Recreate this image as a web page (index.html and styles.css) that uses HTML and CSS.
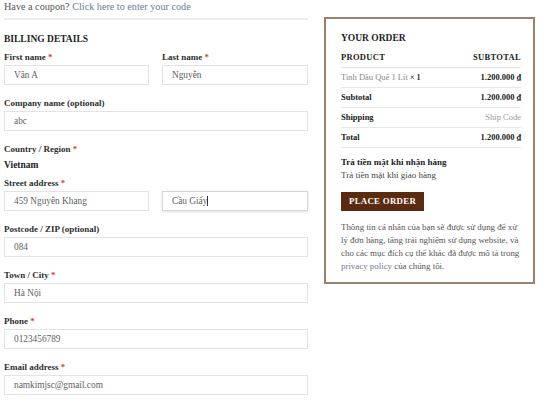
FILE: index.html
```html
<!DOCTYPE html>
<html lang="vi">
<head>
<meta charset="utf-8">
<title>Checkout</title>
<link rel="stylesheet" href="styles.css">
</head>
<body>
<div class="page">
  <section class="billing">
    <p class="coupon">Have a coupon? <a href="#">Click here to enter your code</a></p>
    <h3 class="heading">BILLING DETAILS</h3>
    <div class="row-2">
      <div class="field">
        <label>First name <span class="req">*</span></label>
        <input class="input" type="text" value="Văn A">
      </div>
      <div class="field">
        <label>Last name <span class="req">*</span></label>
        <input class="input" type="text" value="Nguyễn">
      </div>
    </div>
    <div class="field">
      <label>Company name (optional)</label>
      <input class="input" type="text" value="abc">
    </div>
    <div class="field country">
      <label>Country / Region <span class="req">*</span></label>
      <div class="country-value">Vietnam</div>
    </div>
    <div class="field">
      <label>Street address <span class="req">*</span></label>
      <div class="row-2 inner">
        <input class="input" type="text" value="459 Nguyễn Khang">
        <div class="input focused">Cầu Giấy<span class="caret"></span></div>
      </div>
    </div>
    <div class="field">
      <label>Postcode / ZIP (optional)</label>
      <input class="input" type="text" value="084">
    </div>
    <div class="field">
      <label>Town / City <span class="req">*</span></label>
      <input class="input" type="text" value="Hà Nội">
    </div>
    <div class="field">
      <label>Phone <span class="req">*</span></label>
      <input class="input" type="text" value="0123456789">
    </div>
    <div class="field">
      <label>Email address <span class="req">*</span></label>
      <input class="input" type="text" value="namkimjsc@gmail.com">
    </div>
  </section>

  <aside class="order">
    <h3 class="heading order-title">YOUR ORDER</h3>
    <table class="order-table">
      <thead>
        <tr><th>PRODUCT</th><th class="r">SUBTOTAL</th></tr>
      </thead>
      <tbody>
        <tr class="item"><td>Tinh Dầu Quế 1 Lít <strong class="qty">× 1</strong></td><td class="r amount">1.200.000 ₫</td></tr>
      </tbody>
      <tfoot>
        <tr><th>Subtotal</th><td class="r amount">1.200.000 ₫</td></tr>
        <tr class="ship"><th>Shipping</th><td class="r">Ship Code</td></tr>
        <tr><th>Total</th><td class="r amount">1.200.000 ₫</td></tr>
      </tfoot>
    </table>
    <div class="payment">
      <div class="pay-title">Trả tiền mặt khi nhận hàng</div>
      <div class="pay-desc">Trả tiền mặt khi giao hàng</div>
    </div>
    <button class="place" type="button">PLACE ORDER</button>
    <p class="privacy">Thông tin cá nhân của bạn sẽ được sử dụng để xử lý đơn hàng, tăng trải nghiệm sử dụng website, và cho các mục đích cụ thể khác đã được mô tả trong <a href="#">privacy policy</a> của chúng tôi.</p>
  </aside>
</div>
</body>
</html>
```

FILE: styles.css
```css
* { box-sizing: border-box; }
html, body { margin: 0; padding: 0; background: #fff; }
body {
  font-family: "Liberation Serif", "DejaVu Serif", serif;
  color: #444;
  font-size: 10.2px;
}
.page {
  display: flex;
  align-items: flex-start;
  gap: 16px;
  padding: 0 9px 0 4px;
}
.billing { width: 304px; flex: none; }
.coupon {
  margin: 0;
  line-height: 14px;
  padding-bottom: 4px;
  border-bottom: 2px solid #ececec;
  color: #555;
}
a { color: #6a7b98; text-decoration: none; }
.heading {
  margin: 12px 0 5px;
  font-size: 9.5px;
  line-height: 14px;
  font-weight: bold;
  color: #1e1e1e;
}
.row-2 { display: grid; grid-template-columns: 145px 146px; gap: 13px; }
.field { margin-bottom: 12px; }
label {
  display: block;
  font-size: 9px;
  font-weight: bold;
  line-height: 12px;
  color: #2e2e2e;
  margin-bottom: 2px;
}
.req { color: #e2401c; }
.input {
  display: block;
  width: 100%;
  height: 20px;
  border: 1px solid #e3e3e3;
  padding: 0 9px;
  font-family: "Liberation Serif", serif;
  font-size: 9.3px;
  line-height: 18px;
  color: #5e5e5e;
  background: #fff;
  outline: none;
}
.input.focused {
  border-color: #d6d6d6;
  box-shadow: 0 1px 3px rgba(0,0,0,0.12);
}
.caret { display: inline-block; width: 1px; height: 10px; background: #333; vertical-align: -2px; }
.country { margin-bottom: 4px; }
.country-value {
  font-size: 9.5px;
  font-weight: bold;
  line-height: 16px;
  color: #222;
}
.order {
  width: 211px;
  flex: none;
  margin-top: 17px;
  border: 2px solid #9a8070;
  padding: 12px 12px 9px 15px;
}
.order-title { margin: 0 0 3px; }
.order-table {
  width: 100%;
  border-collapse: collapse;
  font-size: 8.5px;
}
.order-table th, .order-table td {
  text-align: left;
  padding: 0;
  height: 20px;
  border-bottom: 1px solid #e8e8e8;
  vertical-align: middle;
}
.order-table thead th {
  height: 19px;
  font-size: 8.5px;
  letter-spacing: 0.3px;
  color: #222;
  border-bottom: 1px solid #e3e3e3;
}
.order-table .r { text-align: right; }
.order-table tfoot th { color: #222; font-weight: bold; }
.item td:first-child { color: #888; }
.qty { color: #333; font-size: 8px; }
.amount { font-weight: bold; color: #222; }
.ship th { color: #888; }
.ship td { color: #999; }
.payment { margin-top: 8px; line-height: 13px; font-size: 9px; }
.pay-title { font-weight: bold; color: #222; }
.pay-desc { color: #444; }
.place {
  display: block;
  margin-top: 10px;
  width: 83px;
  height: 19px;
  padding: 0;
  border: none;
  background: #5a2b10;
  color: #fff;
  font-family: "Liberation Serif", serif;
  font-weight: bold;
  font-size: 8.8px;
  letter-spacing: 0.3px;
}
.privacy {
  margin: 10px 0 0;
  font-size: 8.9px;
  line-height: 13px;
  color: #555;
}
```
